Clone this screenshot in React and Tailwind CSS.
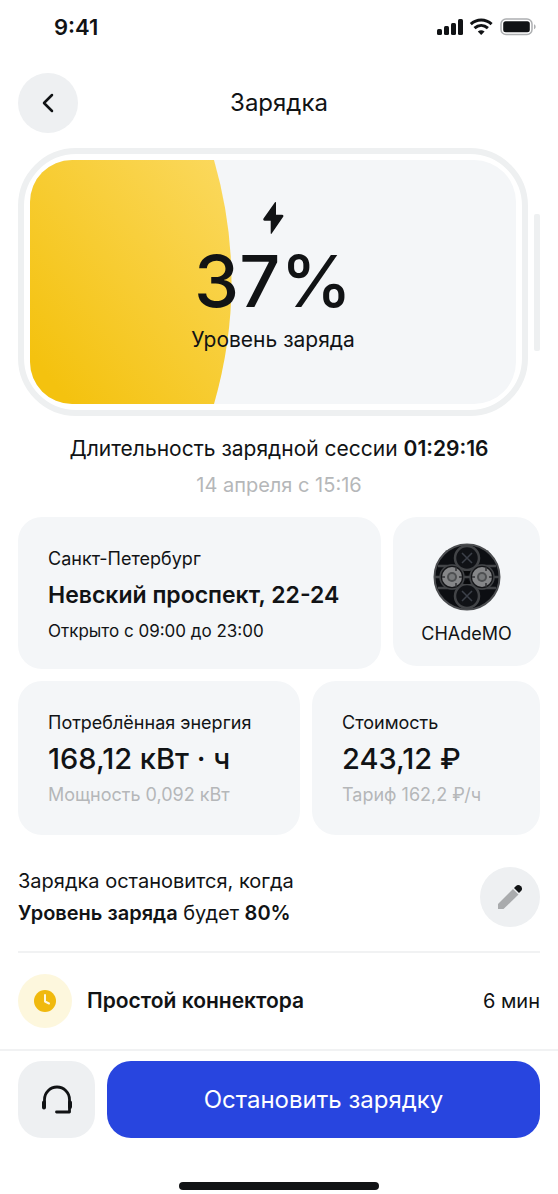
import { useState } from 'react';

const session = {
  level: 37,
  duration: '01:29:16',
  startedAt: '14 апреля с 15:16',
  stopAt: '80%',
  idle: '6 мин',
};

function StatusBar() {
  return (
    <div className="flex h-[54px] items-center justify-between pl-[54px] pr-[21px]">
      <span className="text-[22px] leading-7 font-semibold">9:41</span>
      <svg width="100" height="20" viewBox="0 0 100 20" fill="none" aria-hidden="true">
        <g fill="#111315">
          <rect x="0" y="12" width="5" height="6" rx="1.5" />
          <rect x="7" y="9" width="5" height="9" rx="1.5" />
          <rect x="14" y="6" width="5" height="12" rx="1.5" />
          <rect x="21" y="2" width="5" height="16" rx="1.5" />
          <path d="M40.800 14.400c2.200-1.700 4.600-1.700 6.800 0L44.200 18z" />
        </g>
        <path d="M33.800 7.200c6-5.500 14.800-5.500 20.800 0" stroke="#111315" strokeWidth="3" />
        <path d="M37.500 11.100c4-3.500 9.400-3.500 13.400 0" stroke="#111315" strokeWidth="3" />
        <rect x="64" y="2" width="31" height="15.500" rx="5" stroke="#adafb1" strokeWidth="1.500" />
        <rect x="66.200" y="4.200" width="26.600" height="11" rx="2.500" fill="#111315" />
        <path d="M97 7.200c2.200.8 2.200 4.200 0 5z" fill="#adafb1" />
      </svg>
    </div>
  );
}

function Battery({ level }) {
  return (
    <div className="flex items-center gap-1.5">
      <div className="flex-1 rounded-[58px] border-[6px] border-[#eef0f1] p-1.5">
        <div className="relative h-[244px] overflow-hidden rounded-[42px] bg-[#f4f6f8]">
          <svg className="absolute inset-0 h-full w-full" viewBox="0 0 486 244" preserveAspectRatio="none" aria-hidden="true">
            <defs>
              <linearGradient id="charge" x1="0" y1="1" x2="1" y2="0">
                <stop offset="0.1" stopColor="#f4c20f" />
                <stop offset="1" stopColor="#fbd95f" />
              </linearGradient>
            </defs>
            <path d="M0 0H184Q219 122 184 244H0Z" fill="url(#charge)" />
          </svg>
          <div className="relative flex h-full flex-col items-center pt-10">
            <svg width="24" height="36" viewBox="0 0 24 36" aria-hidden="true">
              <path d="M13.800 2.500 2.500 18.600c-.7 1 0 2.100 1.100 2.100h6.100v12.500c0 .7.600.9 1 .4l11.500-16.800c.7-1 0-2.100-1.100-2.100H15V2.800c0-.8-.8-.9-1.200-.3Z" fill="#111315" />
            </svg>
            <span className="text-[72px] leading-[90px] font-medium">{level}%</span>
            <span className="text-[21px] leading-7">Уровень заряда</span>
          </div>
        </div>
      </div>
      <div className="h-[137px] w-1.5 rounded-xs bg-[#eef0f1]" />
    </div>
  );
}

function Connector() {
  return (
    <svg width="70" height="70" viewBox="0 0 70 70" fill="none" aria-hidden="true">
      <path d="m10 14 4-6h5v12zM60 14l-4-6h-5v12z" fill="#85888a" />
      <circle cx="35" cy="35" r="32.500" fill="#0c0e12" stroke="#4b4d50" strokeWidth="2" />
      <g stroke="#424447" strokeWidth="2.500">
        <path d="M6 24h58M6 46h58M3 35h64" />
        <circle cx="35" cy="16" r="12" fill="#101216" />
        <circle cx="35" cy="54" r="12" fill="#101216" />
      </g>
      <path d="m30 11 10 10m0-10L30 21M30 49l10 10m0-10L30 59" stroke="#3c4049" strokeWidth="1.500" />
      <path d="m31 29 4 5 4-5zM31 42l4-5 4 5z" fill="#08090b" />
      {[20, 50].map((x) => (
        <g key={x}>
          <circle cx={x} cy="35" r="12" fill="#141518" stroke="#424447" strokeWidth="1.500" />
          <circle cx={x} cy="35" r="10" fill="#858688" />
          <circle cx={x} cy="35" r="5" fill="#4d4f51" />
          <circle cx={x} cy="35" r="3" fill="#77797b" />
          <path d={`M${x - 10} 35h3m14 0h3M${x + 4} 25v4m0 12v4`} stroke="#303235" strokeWidth="1.500" />
        </g>
      ))}
    </svg>
  );
}

function InfoCard({ label, value, note, className = '' }) {
  return (
    <div className={`rounded-3xl bg-[#f4f6f8] px-[30px] ${className}`}>
      <p className="text-lg leading-6 whitespace-nowrap">{label}</p>
      {value}
      {note}
    </div>
  );
}

function Metric({ label, value, note, className }) {
  return (
    <InfoCard
      className={`pt-[30px] pb-7 ${className}`}
      label={label}
      value={<p className="text-[29px] leading-12 font-medium whitespace-nowrap">{value}</p>}
      note={<p className="text-lg leading-6 whitespace-nowrap text-[#b5b7b9]">{note}</p>}
    />
  );
}

export default function App() {
  const [stopped, setStopped] = useState(false);

  return (
    <div className="flex min-h-screen flex-col bg-white font-['Inter',sans-serif] text-[#111315]">
      <StatusBar />

      <header className="mt-[19px] grid grid-cols-[60px_1fr_60px] items-center px-[18px]">
        <button type="button" aria-label="Назад" className="flex size-[60px] items-center justify-center rounded-full bg-[#eef0f2]">
          <svg width="24" height="24" viewBox="0 0 24 24" fill="none" stroke="#111315" strokeWidth="2.500" strokeLinecap="round" strokeLinejoin="round">
            <path d="m16 4-8 8 8 8" />
          </svg>
        </button>
        <h1 className="text-center text-2xl leading-8">Зарядка</h1>
      </header>

      <main className="px-[18px] pt-[15px]">
        <Battery level={session.level} />

        <div className="mt-[15px] text-center">
          <p className="text-[21px] leading-9">
            Длительность зарядной сессии <b className="font-semibold">{session.duration}</b>
          </p>
          <p className="text-xl leading-9 text-[#b5b7b9]">{session.startedAt}</p>
        </div>

        <div className="mt-3.5 flex items-start gap-3">
          <InfoCard
            className="flex-1 pt-[30px] pb-[26px]"
            label="Санкт-Петербург"
            value={<p className="my-1 text-[23px] leading-10 font-semibold whitespace-nowrap">Невский проспект, 22-24</p>}
            note={<p className="text-[17px] leading-6 whitespace-nowrap">Открыто с 09:00 до 23:00</p>}
          />
          <div className="flex w-[147px] flex-col items-center rounded-3xl bg-[#f4f6f8] pt-[25px] pb-5">
            <Connector />
            <p className="mt-2.5 text-lg leading-6">CHAdeMO</p>
          </div>
        </div>

        <div className="mt-3 flex gap-3">
          <Metric
            className="flex-1"
            label="Потреблённая энергия"
            value="168,12 кВт · ч"
            note="Мощность 0,092 кВт"
          />
          <Metric
            className="w-[228px]"
            label="Стоимость"
            value="243,12 ₽"
            note="Тариф 162,2 ₽/ч"
          />
        </div>

        <div className="flex items-center justify-between border-b-2 border-[#f1f2f3] pt-[30px] pb-[22px]">
          <p className="text-xl leading-8">
            Зарядка остановится, когда
            <br />
            <b className="font-semibold">Уровень заряда</b> будет <b className="font-semibold">{session.stopAt}</b>
          </p>
          <button type="button" aria-label="Изменить" className="flex size-[60px] items-center justify-center rounded-full bg-[#eef0f2]">
            <svg width="28" height="28" viewBox="0 0 28 28">
              <path d="M2 26v-5L17 6l5.500 5.500L7.500 26Z" fill="#a9abad" />
              <path d="m18 5 2-2c1.500-1.500 3.400-1.200 4.900.3 1.500 1.500 1.600 3.300.1 4.800l-2 2Z" fill="#111315" />
            </svg>
          </button>
        </div>

        <div className="flex items-center py-[21px]">
          <span className="flex size-[54px] items-center justify-center rounded-full bg-[#fdf7dd]">
            <svg width="22" height="22" viewBox="0 0 22 22" fill="none">
              <circle cx="11" cy="11" r="11" fill="#f0b90e" />
              <path d="M11 5v6.500l4 2" stroke="#fff8df" strokeWidth="2" strokeLinecap="round" strokeLinejoin="round" />
            </svg>
          </span>
          <span className="ml-[15px] flex-1 text-[21px] leading-8 font-semibold">Простой коннектора</span>
          <span className="text-xl leading-8">{session.idle}</span>
        </div>
      </main>

      <footer className="border-t-2 border-[#f1f2f3] px-[18px] pt-2.5">
        <div className="flex gap-3">
          <button type="button" aria-label="Поддержка" className="flex size-[77px] items-center justify-center rounded-3xl bg-[#eef0f2]">
            <svg width="32" height="32" viewBox="0 0 32 32" fill="none" stroke="#111315" strokeLinecap="round" strokeLinejoin="round">
              <path d="M3.500 20v-4.500a12.500 12.500 0 0 1 25 0V28H15.500" strokeWidth="2.800" />
              <path d="M3 18.500v5M29 18.500v4.500" strokeWidth="4" />
            </svg>
          </button>
          <button
            type="button"
            disabled={stopped}
            onClick={() => setStopped(true)}
            className="h-[77px] flex-1 rounded-3xl bg-[#2845df] text-2xl leading-8 text-white"
          >
            Остановить зарядку
          </button>
        </div>
        <div className="mx-auto mt-11 mb-1 h-2 w-[200px] rounded-full bg-[#111315]" />
      </footer>
    </div>
  );
}
